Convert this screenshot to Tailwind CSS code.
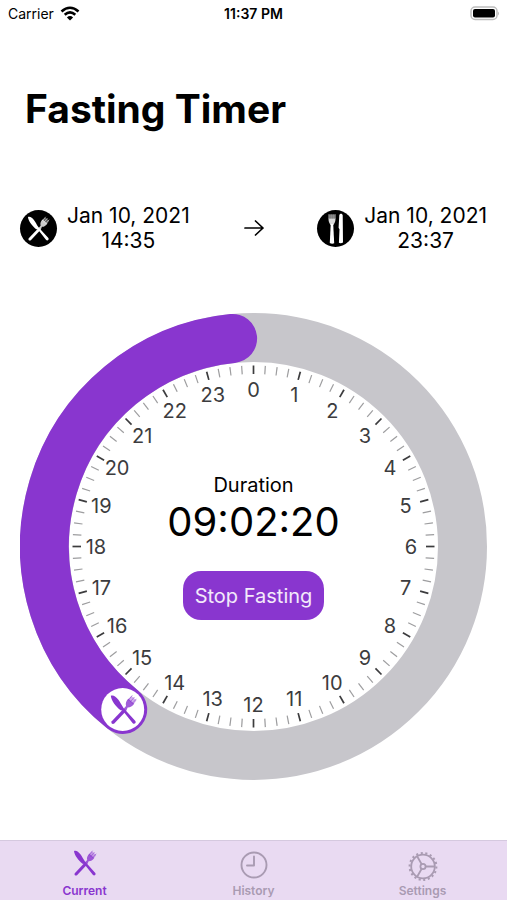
<!DOCTYPE html>
<html lang="en">
<head>
<meta charset="utf-8">
<meta name="viewport" content="width=device-width, initial-scale=1">
<title>Fasting Timer</title>
<script src="https://cdn.jsdelivr.net/npm/@tailwindcss/browser@4"></script>
</head>
<body class="min-h-screen flex flex-col bg-white text-black font-['Inter','Liberation_Sans',sans-serif]">
<svg class="hidden" aria-hidden="true">
  <symbol id="crossed" viewBox="0 0 24 26">
    <path d="M12.300 12.100L14.300 14.200 4 25.200C2.500 26.300.8 24.800 1.800 23.200z" fill="currentColor"/>
    <path d="M12.300 12.100L14.200 10C13.500 7.500 14.500 5.500 16.200 3.700L21.200 8C19.500 10.300 17.800 11.300 15.600 11.200L14.300 14.200z" fill="currentColor" opacity=".8"/>
    <path d="M15.600 4.300L18.800 1.200 23.200 5 20.700 8.600z" fill="currentColor" opacity=".4"/>
    <path d="M16.200 5L19.400 1M17.900 6.300L21.300 2.400M19.700 7.700L23 4" stroke="currentColor" stroke-width=".8" stroke-linecap="round" opacity=".6"/>
    <path d="M1 1C3.500.2 5.500 2 7.400 4.300 9 6.300 9.800 8.400 12 11.600L22.300 23C23.300 24.700 21.400 26.200 20 25L11.200 13.900 9.600 13.700C5.500 10.500 1.500 5.500 1 1z" fill="currentColor"/>
  </symbol>
  <symbol id="upright" viewBox="0 0 36 36">
    <path d="M12.700 14h2.500l1 19.200c-1.500.8-3.200.5-4.400-.3z" fill="currentColor"/>
    <path d="M10.500 8.500h7c0 4-1.200 4.600-2 6.500h-3c-.8-1.900-2-2.500-2-6.500z" fill="currentColor" opacity=".85"/>
    <path d="M10.500 4.500h7v4h-7z" fill="currentColor" opacity=".4"/>
    <path d="M11 4v5M13.100 4v5M15.100 4v5M17.100 4v5" stroke="currentColor" stroke-width=".8" opacity=".5"/>
    <path d="M21.300 5c.8-2 3.200-1.700 3.400.3L25 32.500c-1.200.8-3 .9-4.100.3l.6-13.500-.9-1.500z" fill="currentColor"/>
  </symbol>
</svg>

<header class="grid grid-cols-3 items-center h-7 px-2 text-sm">
  <div class="flex items-center gap-1.5">
    <span>Carrier</span>
    <svg class="w-5 h-4" viewBox="0 0 20 16" fill="none" stroke="#000" stroke-width="2.600" role="img" aria-label="Wi-Fi">
      <path d="M1.500 5.500Q10-2 18.500 5.500M4.700 8.800Q10 4.100 15.300 8.800"/>
      <path d="M6.900 11.400Q10 8.700 13.100 11.400L10 14.500z" fill="#000" stroke="none"/>
    </svg>
  </div>
  <time class="text-center font-semibold">11:37 PM</time>
  <svg class="w-8 h-4 justify-self-end" viewBox="0 0 32 16" role="img" aria-label="Battery full">
    <rect x="4" y="1" width="26" height="12.500" rx="4" fill="#fff" stroke="#bdbdbd" stroke-width="1.500"/>
    <rect x="6" y="3" width="22" height="8.500" rx="2"/>
    <path d="M31 5.500q2 2 0 4z" fill="#bdbdbd"/>
  </svg>
</header>

<main class="flex-1">
  <h1 class="px-[25px] pt-14 text-[39px] leading-[50px] font-bold">Fasting Timer</h1>

  <section class="flex items-center justify-between px-5 pt-[69px] text-[21px] leading-[25px]" aria-label="Fasting period">
    <div class="flex items-center gap-2.5">
      <span class="grid place-items-center size-[37px] rounded-full bg-black text-white"><svg class="w-[23px] h-[25px]"><use href="#crossed"/></svg></span>
      <time class="text-center">Jan 10, 2021<br>14:35</time>
    </div>
    <svg class="w-5 h-5" viewBox="0 0 20 20" fill="none" stroke="#000" stroke-width="1.700" stroke-linecap="round" stroke-linejoin="round" aria-hidden="true"><path d="M1 10h18M11.500 3l7.500 7-7.500 7"/></svg>
    <div class="flex items-center gap-2.5">
      <span class="grid place-items-center size-[37px] rounded-full bg-black text-white"><svg class="size-9"><use href="#upright"/></svg></span>
      <time class="text-center">Jan 10, 2021<br>23:37</time>
    </div>
  </section>

  <section class="grid px-5 pt-[60px]" aria-label="Timer">
    <svg class="col-start-1 row-start-1 w-full" viewBox="0 0 467 467" role="img" aria-label="Fasting from 14:35 to 23:37">
      <circle cx="233.500" cy="233.500" r="209" fill="none" stroke="#c7c6cb" stroke-width="49"/>
      <path d="M102.700 396.500A209 209 0 0 1 212.600 25.500" fill="none" stroke="#8936cf" stroke-width="49" stroke-linecap="round"/>
      <circle cx="102.700" cy="396.500" r="21.500" fill="#fff"/>
      <svg x="89.500" y="381.500" width="28" height="30" color="#8936cf"><use href="#crossed"/></svg>
      <g id="ticks"></g>
      <g id="hours" class="text-xl" fill="#3c3c3e" text-anchor="middle"></g>
    </svg>
    <div class="col-start-1 row-start-1 z-10 place-self-center flex flex-col items-center">
      <p class="text-xl leading-6">Duration</p>
      <p class="text-[40px] leading-[50px]">09:02:20</p>
      <button type="button" class="mt-6 h-[49px] px-3 rounded-[18px] bg-[#8936cf] text-xl text-white/90">Stop Fasting</button>
    </div>
  </section>
</main>

<nav class="grid grid-cols-3 h-[60px] pt-2 border-t border-[#d5c9df] bg-[#e9daf2] text-xs font-semibold text-[#a99bb2]">
  <a href="#current" aria-current="page" class="flex flex-col items-center gap-0.5 text-[#8936cf]">
    <svg class="size-8" viewBox="0 0 32 32" aria-hidden="true"><use href="#crossed" x="4" y="1" width="24" height="26"/></svg>
    <span>Current</span>
  </a>
  <a href="#history" class="flex flex-col items-center gap-0.5">
    <svg class="size-8" viewBox="0 0 32 32" fill="none" stroke="currentColor" stroke-width="1.900" stroke-linecap="round" stroke-linejoin="round" aria-hidden="true"><circle cx="16" cy="16" r="12.500"/><path d="M16 7.500V16.500H9"/></svg>
    <span>History</span>
  </a>
  <a href="#settings" class="flex flex-col items-center gap-0.5">
    <svg class="size-8" viewBox="0 0 32 32" fill="none" stroke="currentColor" stroke-width="1.800" aria-hidden="true">
      <circle cx="16" cy="17.500" r="11.800"/>
      <circle cx="16" cy="17.500" r="13.400" stroke-width="2" pathLength="72" stroke-dasharray="1.800 2.200"/>
      <circle cx="16" cy="17.500" r="2.600"/>
      <path d="M18.600 17.500H27.800M14.700 15.200L10.100 7.300M14.700 19.800L10.100 27.700"/>
    </svg>
    <span>Settings</span>
  </a>
</nav>

<script>
  const NS = 'http://www.w3.org/2000/svg';
  const C = 233.5;
  for (let i = 0; i < 96; i++) {
    const major = i % 4 === 0;
    const tick = document.createElementNS(NS, 'line');
    tick.setAttribute('x1', C);
    tick.setAttribute('x2', C);
    tick.setAttribute('y1', C - 181);
    tick.setAttribute('y2', C - 172.5);
    tick.setAttribute('stroke', major ? '#3c3c3e' : '#9d9d9f');
    tick.setAttribute('stroke-width', major ? 1.7 : 1.2);
    tick.setAttribute('transform', `rotate(${i * 3.75} ${C} ${C})`);
    document.getElementById('ticks').append(tick);
  }
  for (let h = 0; h < 24; h++) {
    const a = h * Math.PI / 12;
    const label = document.createElementNS(NS, 'text');
    label.setAttribute('x', C + 157.5 * Math.sin(a));
    label.setAttribute('y', C - 157.5 * Math.cos(a) + 7.5);
    label.textContent = h;
    document.getElementById('hours').append(label);
  }
</script>
</body>
</html>
